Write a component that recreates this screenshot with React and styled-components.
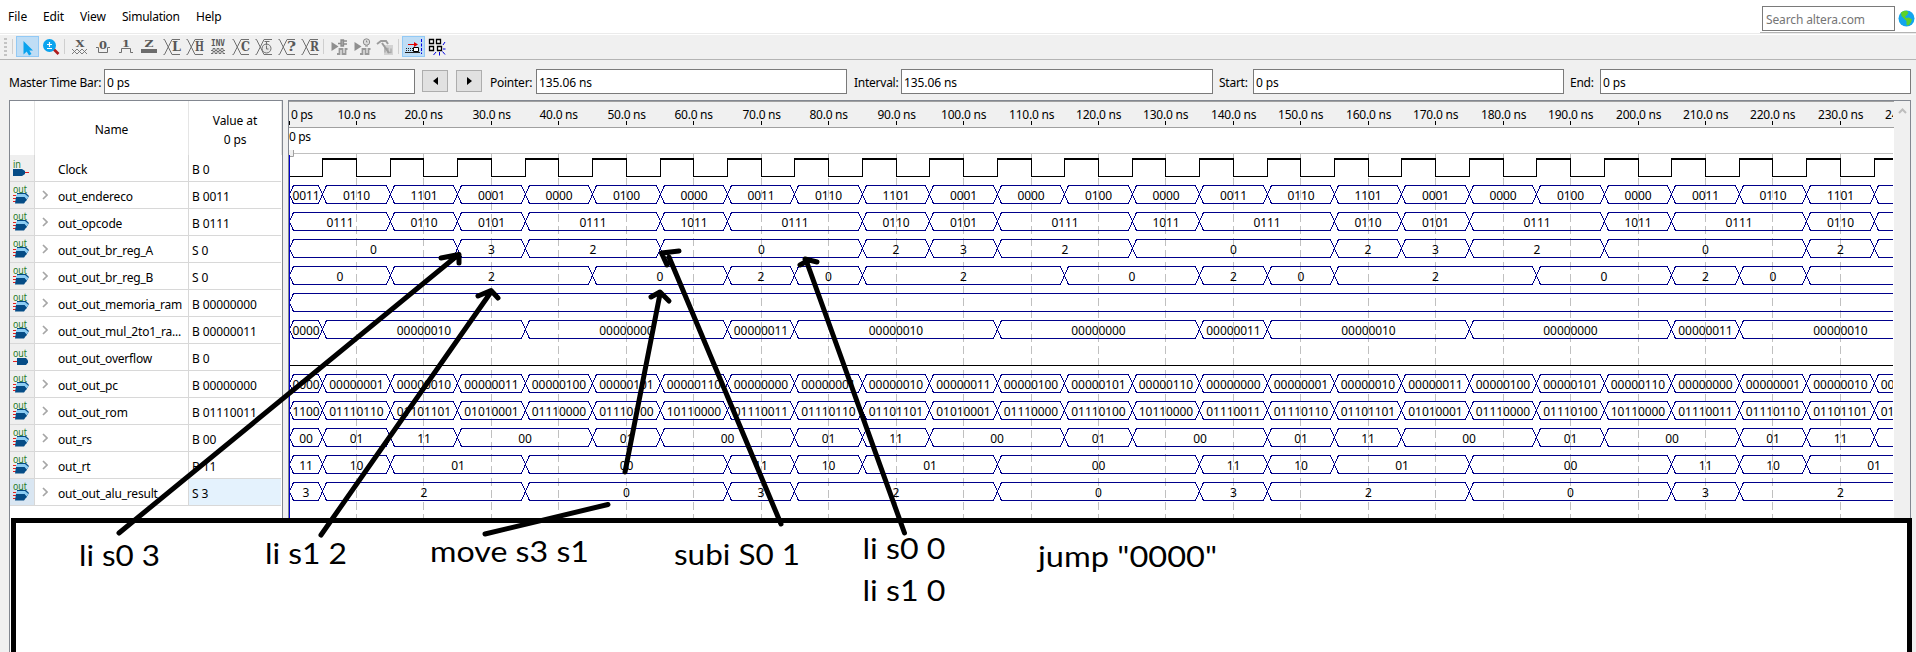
import React from 'react';
import styled, { createGlobalStyle } from 'styled-components';

const GlobalStyle = createGlobalStyle`
  * { box-sizing: border-box; }
  html, body { margin: 0; overflow: hidden; }
  body {
    font-family: "Noto Sans", "Open Sans", sans-serif;
    font-size: 12px;
    color: #000;
    background: #f0f0f0;
  }
  svg { display: block; }
`;

const Window = styled.div`
  position: relative;
  width: 1916px;
  height: 652px;
  overflow: hidden;
  display: flex;
  flex-direction: column;
  background: #f0f0f0;
`;

/* ---------- menu bar ---------- */
const MenuBar = styled.div`
  height: 35px;
  display: flex;
  background: #fff;
  padding-left: 8px;
  box-shadow: inset 0 -1px #fff, inset 0 -2px #ebebeb;
`;
const MenuItem = styled.span`
  width: ${(p) => p.$w}px;
  line-height: 34px;
  letter-spacing: ${(p) => p.$ls || 0}px;
`;
const SearchArea = styled.div`
  margin-left: auto;
  width: 156px;
  height: 33px;
  padding: 6px 0 0 2px;
  display: flex;
  gap: 3px;
  border-bottom: 1px solid #b4b4b4;
`;
const SearchBox = styled.div`
  width: 133px;
  height: 25px;
  border: 1px solid #7a7a7a;
  padding-left: 3px;
  line-height: 26px;
  color: #757575;
  letter-spacing: -0.12px;
`;
const GlobeSlot = styled.div`
  padding-top: 4px;
`;

/* ---------- tool bar ---------- */
const ToolBar = styled.div`
  height: 25px;
  display: flex;
  align-items: center;
  border-bottom: 1px solid #b4b4b4;
  padding: 1px 0 2px;
`;
const Grip = styled.div`
  width: 3px;
  height: 18px;
  margin: 0 4px;
  background: repeating-linear-gradient(to bottom, #c3c3c3 0 2px, transparent 2px 4px);
`;
const Divider = styled.div`
  width: 1px;
  height: 15px;
  margin: 0 ${(p) => p.$right}px 0 ${(p) => p.$left}px;
  background: #cfcfcf;
`;
const ToolButton = styled.div`
  width: 23px;
  height: 21px;
  display: flex;
  align-items: center;
  justify-content: center;
  background: ${(p) => (p.$on ? '#bfddf5' : 'transparent')};
  box-shadow: ${(p) => (p.$on ? 'inset 0 0 0 1px #92c9f5' : 'none')};
`;
const IconSvg = styled.svg`
  width: 18px;
  height: 19px;
  overflow: visible;
`;

/* ---------- time fields ---------- */
const TimeBar = styled.div`
  height: 40px;
  padding: 9px 4px 0 9px;
  display: flex;
`;
const TimeLabel = styled.span`
  width: ${(p) => p.$w}px;
  line-height: 27px;
  letter-spacing: ${(p) => p.$ls ?? -0.25}px;
  white-space: nowrap;
`;
const TimeField = styled.div`
  width: ${(p) => p.$w || 311}px;
  height: 25px;
  margin-right: ${(p) => p.$gap ?? 6}px;
  border: 1px solid #7a7a7a;
  background: #fff;
  padding-left: 2px;
  line-height: 26px;
  letter-spacing: -0.1px;
`;
const StepButton = styled.div`
  width: 26px;
  height: 22px;
  margin: 1px 8px 0 0;
  display: flex;
  align-items: center;
  justify-content: center;
  background: #e1e1e1;
  border: 1px solid #adadad;
`;

/* ---------- panels ---------- */
const Panels = styled.div`
  flex: 1;
  display: flex;
  gap: 5px;
  padding-left: 9px;
`;
const SignalPanel = styled.div`
  width: 274px;
  border: 1px solid #828790;
  border-bottom: 0;
  background: #fff;
`;
const HeaderRow = styled.div`
  height: 54px;
  display: flex;
`;
const HeaderCell = styled.div`
  width: ${(p) => p.$w}px;
  border-right: 1px solid #e5e5e5;
  padding-top: 3px;
  display: flex;
  align-items: center;
  justify-content: center;
  text-align: center;
  line-height: 19px;
  letter-spacing: -0.1px;
`;
const SignalRow = styled.div`
  height: 27px;
  width: 271px;
  display: flex;
  border-bottom: 1px solid #d8d8d8;
`;
const PinCell = styled.div`
  width: 24px;
  padding-left: 2px;
  background: ${(p) => (p.$on ? '#d9e6f2' : '#efefef')};
`;
const NameCell = styled.div`
  width: 155px;
  display: flex;
  align-items: center;
  border-left: 1px solid #d8d8d8;
  border-right: 1px solid #d8d8d8;
`;
const ExpandSlot = styled.div`
  width: 23px;
  padding-left: 7px;
`;
const SignalName = styled.span`
  line-height: 26px;
  padding-top: 3px;
  white-space: nowrap;
  letter-spacing: -0.2px;
`;
const ValueCell = styled.div`
  flex: 1;
  padding: 1px 0 0 3px;
  line-height: 28px;
  letter-spacing: -0.1px;
  background: ${(p) => (p.$on ? '#e4f2fd' : '#fff')};
`;
const WavePanel = styled.div`
  width: 1623px;
  display: flex;
  border: 1px solid #828790;
  border-bottom: 0;
`;
const WaveColumn = styled.div`
  width: 1605px;
  border-top: 1px solid #a0a0a0;
  background: #fff;
`;
const Ruler = styled.div`
  height: 26px;
  background: #f0f0f0;
  border-bottom: 1px solid #a0a0a0;
`;
const ScrollBar = styled.div`
  flex: 1;
  padding: 6px 0 0 4px;
  background: #f0f0f0;
`;

/* ---------- annotations ---------- */
const NoteFrame = styled.div`
  position: absolute;
  left: 11px;
  top: 518px;
  width: 1901px;
  height: 140px;
  border: 5px solid #000;
  background: #fff;
`;
const NoteLayer = styled.svg`
  position: absolute;
  left: 0;
  top: 0;
`;

/* ---------- icons ---------- */
const G = '#585858';
const Glyph = ({ children, x = 0, y, size = 10, fill = G, w, family = 'DejaVu Serif' }) => (
  <text x={x} y={y} fontSize={size} fontWeight="700" fill={fill} textLength={w}
    lengthAdjust="spacingAndGlyphs" fontFamily={`"${family}", "Liberation Serif", serif`}>{children}</text>
);
const Icon = ({ children }) => (
  <IconSvg viewBox="0 0 18 19">{children}</IconSvg>
);
const Bus = () => (
  <path d="M.5 2.500h1L9 17.500h8M.5 17.500h1L9 2.500h8" fill="none" stroke="#707070" strokeWidth="1" />
);
const BusLetter = ({ ch }) => (
  <Icon><Bus /><rect x="9.400" y="4" width="9" height="11" fill="#f0f0f0" /><Glyph x={9} y={14} size={12} w={9}>{ch}</Glyph></Icon>
);
const GearWave = ({ kind }) => (
  <Icon>
    <path d="M1.500 5v9l7-4.500z" fill="#8f8f8f" />
    <path d="M7 17h2.500v-5h3v5h3v-5h2" fill="none" stroke="#999" strokeWidth="1.800" />
    {kind === 'plug' && <path d="M8 6.500h3M14 4h3M14 7h3M11 3h2.500v6H11z" stroke="#8c8c8c" strokeWidth="1.300" fill="#aaa" />}
    {kind === 'clock' && <g fill="#ddd" stroke="#8c8c8c"><circle cx="13.500" cy="5" r="3.200" /><path d="M13.500 3.500v1.500h1M12 9h3" /></g>}
  </Icon>
);

const icons = {
  pointer: <Icon><path d="M4.500 4v13.500l3.200-3L10 18.500l2.500-1.500-2.200-3.500H14z" fill="#0aa3ee" /></Icon>,
  zoom: <Icon><path d="M11.500 12l5 5" stroke="#b01c1c" strokeWidth="2.600" /><circle cx="7.500" cy="8.500" r="6.500" fill="#0aa3ee" /><path d="M5 7.500h5M7.500 5v5M5 11.500h5" stroke="#fff" strokeWidth="1.200" /></Icon>,
  unknown: <Icon><Glyph x={4.500} y={10} size={10} w={9}>X</Glyph><path d="M1 12l5 5M6 12l-5 5M6 12l5 5M11 12l-5 5M11 12l5 5M16 12l-5 5" stroke="#707070" strokeWidth=".9" /></Icon>,
  low: <Icon><Glyph x={5} y={12} size={11} w={8}>0</Glyph><path d="M2 10.500h2.500v5h9v-5H16" fill="none" stroke="#707070" /></Icon>,
  high: <Icon><Glyph x={5} y={10} size={10} w={8}>1</Glyph><path d="M2 15.500h2.500v-4h9v4H16" fill="none" stroke="#707070" /></Icon>,
  hiz: <Icon><Glyph x={4.500} y={10} size={10} w={9}>Z</Glyph><rect x="1" y="12" width="16" height="4" fill="#6c6c6c" /></Icon>,
  busL: <BusLetter ch="L" />,
  busH: <BusLetter ch="H" />,
  invert: <Icon><Glyph x={2} y={9} size={9} w={14} family="DejaVu Sans Mono">INV</Glyph><path d="M2 13.500h2v-2h2v2h2v-2h2v2h2v-2h2v2h2M2 16.500h2v-2h2v2h2v-2h2v2h2v-2h2v2h2" fill="none" stroke="#707070" /></Icon>,
  busC: <BusLetter ch="C" />,
  clock: <Icon><Bus /><circle cx="11.500" cy="11.500" r="4.500" fill="#e6e6e6" stroke="#707070" /><path d="M9.500 4.500h5M11.500 5v3M11.500 8.500V12h2" stroke="#707070" fill="none" /></Icon>,
  busQ: <BusLetter ch="?" />,
  busR: <BusLetter ch="R" />,
  runFunc: <GearWave kind="plug" />,
  runTime: <GearWave kind="clock" />,
  script: <Icon><path d="M8 8h9v10H8z" fill="#d2d2d2" /><path d="M9 15.500v-4h3v4h3v-4" fill="none" stroke="#aaa" strokeWidth="1.300" /><path d="M1 7l4-3h5l2 3M6 6l7 10" stroke="#9c9c9c" strokeWidth="2" fill="none" /></Icon>,
  snap: <Icon><path d="M3 7.500h8" stroke="#e00000" /><path d="M9 5l4 2.500L9 10z" fill="#e00000" /><path d="M1 11.500h7M1 13.500h7" stroke="#222" strokeDasharray="1 1" /><path d="M8.500 10.500h5v4h-5z" fill="#fff" stroke="#000" /><path d="M0 15.500h15" stroke="#222" /><path d="M16.500 2v15" stroke="#0000e0" strokeDasharray="3 1.500" /></Icon>,
  grid: <Icon><path d="M1.500 2.500h4v4h-4zM8.500 2.500h4v4h-4zM1.500 9.500h4v4h-4z" fill="#fff" stroke="#000" strokeWidth="1.300" /><path d="M9.500 9.500h4v4h-4z" fill="#fff" stroke="#000" strokeWidth="1.300" /><path d="M15 8l2-3M15 12h2.500M14.500 14.500l2.500 3M11.500 15v3.500M8 15l-2.500 3" stroke="#0000e0" /></Icon>,
};

const Globe = () => (
  <svg width="17" height="17" viewBox="0 0 17 17">
    <circle cx="8.500" cy="8.500" r="8" fill="#12a5ee" />
    <path d="M3 2.500c2-2 5-2 6-1.500l1.500 1.500L9 5 7 6.500l1 1.500 3-.5 3 2-1 3-2.500 3-2-.5V11L6 8.500 3.500 6z" fill="#5cd12a" />
  </svg>
);

const PinSvg = styled.svg`
  width: 20px;
  height: 26px;
  overflow: visible;
`;

const PinIcon = ({ type }) => {
  const label = (y, t, w) => (
    <text x="1" y={y} fontSize="11.500" fill="#247a24" textLength={w} lengthAdjust="spacingAndGlyphs">{t}</text>
  );
  return (
    <PinSvg viewBox="0 0 20 26">
      {type === 'in' && (<>{label(13, 'in', 8)}<path d="M13 17.500h4" stroke="#e02020" /><path d="M1 14h9l3 2v3l-3 2H1z" fill="#054c86" /></>)}
      {type === 'out' && (<>{label(13, 'out', 14)}<path d="M1 17.500h4" stroke="#e02020" /><path d="M5 14h9l2 2.500v2L14 21H5z" fill="#054c86" /></>)}
      {type === 'bus' && (<>
        <path d="M1 13.500h3M1 16.500h3M1 19.500h3" stroke="#e02020" />
        <path d="M5 11h9l3 3-3 5H5z" fill="#054c86" />
        <path d="M4 13.500l1.500-1.500H13l3.500 3-2 2.500-2-2.500H4z" fill="#8dcdf3" />
        <path d="M4 15h8l2.500 3-2.500 3.500H3z" fill="#054c86" />
        {label(11, 'out', 14)}
      </>)}
    </PinSvg>
  );
};

/* ---------- data ---------- */
const signals = [
  { name: 'Clock', value: 'B 0', pin: 'in' },
  { name: 'out_endereco', value: 'B 0011', pin: 'bus' },
  { name: 'out_opcode', value: 'B 0111', pin: 'bus' },
  { name: 'out_out_br_reg_A', value: 'S 0', pin: 'bus' },
  { name: 'out_out_br_reg_B', value: 'S 0', pin: 'bus' },
  { name: 'out_out_memoria_ram', value: 'B 00000000', pin: 'bus' },
  { name: 'out_out_mul_2to1_ra...', value: 'B 00000011', pin: 'bus' },
  { name: 'out_out_overflow', value: 'B 0', pin: 'out' },
  { name: 'out_out_pc', value: 'B 00000000', pin: 'bus' },
  { name: 'out_out_rom', value: 'B 01110011', pin: 'bus' },
  { name: 'out_rs', value: 'B 00', pin: 'bus' },
  { name: 'out_rt', value: 'B 11', pin: 'bus' },
  { name: 'out_out_alu_result', value: 'S 3', pin: 'bus', selected: true },
];

/* One 70 ns loop of the program, sampled in 10 ns slots; slot 0 is cut to 0-5 ns. */
const loops = {
  1: ['0011', '0110', '1101', '0001', '0000', '0100', '0000'],
  2: ['0111', '0111', '0110', '0101', '0111', '0111', '1011'],
  3: ['0', '0', '2', '3', '2', '2', '0'],
  4: ['2', '0', '2', '2', '2', '0', '0'],
  6: ['00000011', '00000010', '00000010', '00000010', '00000000', '00000000', '00000000'],
  8: ['00000000', '00000001', '00000010', '00000011', '00000100', '00000101', '00000110'],
  9: ['01110011', '01110110', '01101101', '01010001', '01110000', '01110100', '10110000'],
  10: ['00', '01', '11', '00', '00', '01', '00'],
  11: ['11', '10', '01', '01', '00', '00', '00'],
  12: ['3', '2', '2', '2', '0', '0', '0'],
};
const firstLabel = { 6: '0000', 8: '0000', 9: '1100' };

function segmentsOf(row) {
  const out = [];
  for (let k = 0; k < 26; k += 1) {
    let v = loops[row][k % 7];
    if ((row === 3 && k === 2) || (row === 4 && k === 0)) v = '0';
    const start = k === 0 ? 0 : k * 10 - 5;
    const last = out[out.length - 1];
    if (last && last.v === v) last.end = k * 10 + 5;
    else out.push({ v, start, end: k * 10 + 5 });
  }
  if (firstLabel[row]) out[0].label = firstLabel[row];
  return out;
}

const X = (ns) => Math.floor(ns * 6.745 + 0.05);
const W = 1604;

const Digits = ({ cx, y, children }) => {
  const w = children.length * 6.8;
  if (cx - w / 2 > W) return null;
  return (
    <text x={cx - w / 2} y={y} fontSize="12" fill="#000" textLength={children.length > 1 ? w : undefined}>{children}</text>
  );
};

const BusWave = ({ row }) => {
  const top = 57.5 + (row - 1) * 27;
  const bot = top + 18;
  const mid = top + 9;
  if (row === 5) {
    return <path d={`M${W} ${top}H4.500L.5 ${mid}L4.500 ${bot}H${W}`} fill="none" stroke="#00008b" shapeRendering="crispEdges" />;
  }
  return segmentsOf(row).map((s) => {
    const a = X(s.start) + 0.5;
    const b = X(s.end) + 0.5;
    return (
      <g key={s.start}>
        <path d={`M${a} ${mid}L${a + 4} ${top}H${b - 4}L${b} ${mid}L${b - 4} ${bot}H${a + 4}Z`}
          fill="none" stroke="#00008b" shapeRendering="crispEdges" />
        <Digits cx={(a + b) / 2} y={top + 14.5}>{s.label || s.v}</Digits>
      </g>
    );
  });
};

const decades = Array.from({ length: 25 }, (_, i) => i * 10);

function clockPath() {
  let d = 'M1 48.500';
  for (let k = 0; k < 24; k += 1) {
    const up = X(k * 10 + 5) + 0.5;
    const down = X(k * 10 + 10) + 0.5;
    d += `H${up}V30.500H${down}V48.500`;
  }
  return d;
}
const clockTops = Array.from({ length: 24 }, (_, k) => `M${X(k * 10 + 5)} 31H${X(k * 10 + 10) + 1}`).join('');

const RulerMarks = () => (
  <svg width={W} height="25">
    {decades.map((t) => (
      <g key={t}>
        <rect x={X(t)} y="19" width="1" height="4" fill="#000" />
        {t === 0
          ? <text x="2" y="17" fontSize="12" textLength="22">0 ps</text>
          : <text x={X(t) - (t < 100 ? 18.500 : 22)} y="17" fontSize="12" textLength={t < 100 ? 38.500 : 45.500}>{`${t}.0 ns`}</text>}
      </g>
    ))}
  </svg>
);

const Waves = () => (
  <svg width={W} height="524">
    <text x="0" y="13" fontSize="12" textLength="22">0 ps</text>
    <path d={`M5 25.500H${W}`} stroke="#c0c0c0" />
    <path d="M0 22h4v6H0z" fill="#f0f0f0" />
    <path d="M4.500 22v6.500H0" fill="none" stroke="#a0a0a0" />
    {decades.slice(1).map((t) => (
      <path key={t} d={`M${X(t) + 0.5} 26V524`} stroke="#c0c0c0" strokeDasharray="8 4" />
    ))}
    <path d={clockPath()} fill="none" stroke="#000" shapeRendering="crispEdges" />
    <path d={clockTops} stroke="#000" strokeWidth="2" shapeRendering="crispEdges" />
    <path d={`M1 237.500H${W}`} stroke="#000" />
    {[1, 2, 3, 4, 5, 6, 8, 9, 10, 11, 12].map((r) => <BusWave key={r} row={r} />)}
    <path d="M.5 27V524" stroke="#0000d0" />
  </svg>
);

const notes = [
  { t: 'li s0 3', x: 79, y: 566, w: 81 },
  { t: 'li s1 2', x: 265, y: 564, w: 82 },
  { t: 'move s3 s1', x: 430, y: 562, w: 159 },
  { t: 'subi S0 1', x: 674, y: 565, w: 126 },
  { t: 'li s0 0', x: 862.5, y: 559, w: 83 },
  { t: 'li s1 0', x: 862.5, y: 601, w: 83 },
  { t: 'jump "0000"', x: 1038, y: 567, w: 179 },
];
const strokes = [
  'M119 533L458 255M441 258L459 254.500V263',
  'M321 535L491 292M478 296L491 290.500L498 298',
  'M625 472L660 294M651 297L660 292L669 301',
  'M485 534L608 504.500',
  'M781 524L669 257M679 251L661.500 253L667 265',
  'M904.500 533L806 260M800 265L809 260M805 259L817 262',
];

export default function App() {
  const tools = (names) => names.map((n) => (
    <ToolButton key={n} $on={n === 'pointer' || n === 'snap'}>{icons[n]}</ToolButton>
  ));
  return (
    <>
      <GlobalStyle />
      <Window>
        <MenuBar>
          <MenuItem $w={35}>File</MenuItem>
          <MenuItem $w={37} $ls={-0.1}>Edit</MenuItem>
          <MenuItem $w={42} $ls={-0.1}>View</MenuItem>
          <MenuItem $w={74} $ls={-0.25}>Simulation</MenuItem>
          <MenuItem $w={40} $ls={-0.2}>Help</MenuItem>
          <SearchArea>
            <SearchBox>Search altera.com</SearchBox>
            <GlobeSlot><Globe /></GlobeSlot>
          </SearchArea>
        </MenuBar>
        <ToolBar>
          <Grip />
          <Divider $left={1} $right={3} />
          {tools(['pointer', 'zoom'])}
          <Divider $left={2} $right={3} />
          {tools(['unknown', 'low', 'high', 'hiz', 'busL', 'busH', 'invert', 'busC', 'clock', 'busQ', 'busR'])}
          <Divider $left={2} $right={3} />
          {tools(['runFunc', 'runTime', 'script'])}
          <Divider $left={2} $right={3} />
          {tools(['snap', 'grid'])}
        </ToolBar>
        <TimeBar>
          <TimeLabel $w={95}>Master Time Bar:</TimeLabel>
          <TimeField $gap={7}>0 ps</TimeField>
          <StepButton><svg width="5" height="8"><path d="M5 0v8L0 4z" /></svg></StepButton>
          <StepButton><svg width="5" height="8"><path d="M0 0v8l5-4z" /></svg></StepButton>
          <TimeLabel $w={46}>Pointer:</TimeLabel>
          <TimeField $gap={7}>135.06 ns</TimeField>
          <TimeLabel $w={47}>Interval:</TimeLabel>
          <TimeField $w={312}>135.06 ns</TimeField>
          <TimeLabel $w={34}>Start:</TimeLabel>
          <TimeField>0 ps</TimeField>
          <TimeLabel $w={30}>End:</TimeLabel>
          <TimeField $gap={0}>0 ps</TimeField>
        </TimeBar>
        <Panels>
          <SignalPanel>
            <HeaderRow>
              <HeaderCell $w={25} />
              <HeaderCell $w={154}>Name</HeaderCell>
              <HeaderCell $w={93}>Value at<br />0 ps</HeaderCell>
            </HeaderRow>
            {signals.map((s) => (
              <SignalRow key={s.name}>
                <PinCell $on={s.selected}><PinIcon type={s.pin} /></PinCell>
                <NameCell>
                  <ExpandSlot>
                    {s.pin === 'bus' && (
                      <svg width="6" height="10" viewBox="0 0 6 10"><path d="M1 1l4 4-4 4" fill="none" stroke="#a6a6a6" strokeWidth="1.700" /></svg>
                    )}
                  </ExpandSlot>
                  <SignalName>{s.name}</SignalName>
                </NameCell>
                <ValueCell $on={s.selected}>{s.value}</ValueCell>
              </SignalRow>
            ))}
          </SignalPanel>
          <WavePanel>
            <WaveColumn>
              <Ruler><RulerMarks /></Ruler>
              <Waves />
            </WaveColumn>
            <ScrollBar>
              <svg width="9" height="8" viewBox="0 0 9 8"><path d="M1 6l3.500-3.500L8 6" fill="none" stroke="#bdbdbd" strokeWidth="2" /></svg>
            </ScrollBar>
          </WavePanel>
        </Panels>
        <NoteFrame />
        <NoteLayer width="1916" height="652">
          {strokes.map((d) => (
            <path key={d} d={d} fill="none" stroke="#000" strokeWidth="5" strokeLinecap="round" strokeLinejoin="round" />
          ))}
          {notes.map((n) => (
            <text key={n.t} x={n.x} y={n.y} fontSize="29.500" fontFamily="Lato, sans-serif" textLength={n.w} lengthAdjust="spacingAndGlyphs">{n.t}</text>
          ))}
        </NoteLayer>
      </Window>
    </>
  );
}
